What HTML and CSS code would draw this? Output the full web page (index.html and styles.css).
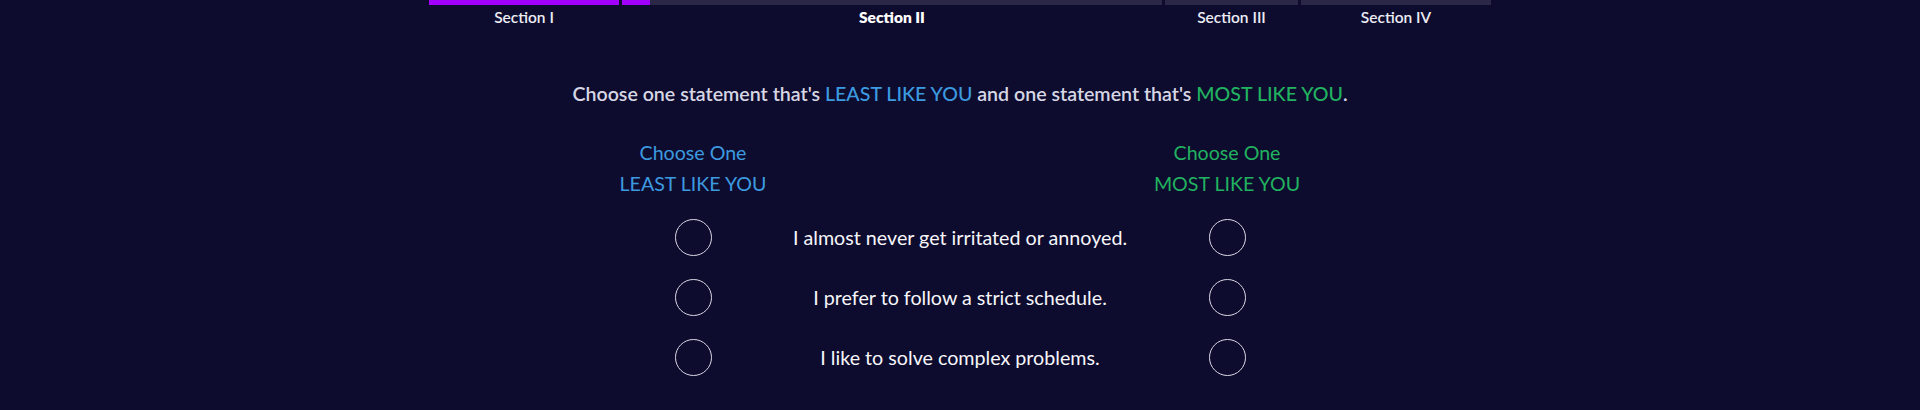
FILE: index.html
```html
<!DOCTYPE html>
<html lang="en">
<head>
<meta charset="utf-8">
<title>Assessment</title>
<link rel="stylesheet" href="styles.css">
</head>
<body>
<div class="progress">
  <div class="seg seg-1">
    <div class="track"><div class="fill" style="width:100%"></div></div>
    <div class="label">Section I</div>
  </div>
  <div class="seg seg-2">
    <div class="track"><div class="fill" style="width:28px"></div></div>
    <div class="label current">Section II</div>
  </div>
  <div class="seg seg-3">
    <div class="track"></div>
    <div class="label">Section III</div>
  </div>
  <div class="seg seg-4">
    <div class="track"></div>
    <div class="label">Section IV</div>
  </div>
</div>

<p class="prompt">Choose one statement that's <span class="least">LEAST LIKE YOU</span> and one statement that's <span class="most">MOST LIKE YOU</span>.</p>

<div class="question">
  <div class="col-head least">Choose One<br>LEAST LIKE YOU</div>
  <div class="col-head"></div>
  <div class="col-head most">Choose One<br>MOST LIKE YOU</div>

  <div class="cell"><span class="radio"></span></div>
  <div class="cell statement">I almost never get irritated or annoyed.</div>
  <div class="cell"><span class="radio"></span></div>

  <div class="cell"><span class="radio"></span></div>
  <div class="cell statement">I prefer to follow a strict schedule.</div>
  <div class="cell"><span class="radio"></span></div>

  <div class="cell"><span class="radio"></span></div>
  <div class="cell statement">I like to solve complex problems.</div>
  <div class="cell"><span class="radio"></span></div>
</div>
</body>
</html>
```
FILE: styles.css
```css
html, body {
  margin: 0;
  padding: 0;
  background: #0e0c2e;
  height: 100%;
}
body {
  font-family: Lato, "Open Sans", sans-serif;
  color: #ffffff;
}
.progress {
  width: 1062px;
  margin: 0 auto;
  display: flex;
  gap: 3px;
}
.seg-1 { width: 190px; }
.seg-2 { width: 540px; }
.seg-3 { width: 133px; }
.seg-4 { width: 190px; }
.track {
  height: 5px;
  background: #2a2846;
  display: flex;
}
.fill {
  background: #a100ff;
  height: 100%;
}
.label {
  text-align: center;
  font-size: 15.5px;
  font-weight: 600;
  line-height: 18px;
  margin-top: 3px;
  color: #ececf4;
}
.label.current {
  font-weight: 800;
  color: #ffffff;
}
.prompt {
  margin: 56px 0 0;
  text-align: center;
  font-size: 19.6px;
  font-weight: 600;
  line-height: 24px;
  color: #d6d6e4;
}
.least { color: #3c9be0; }
.most { color: #21b360; }
.prompt .least, .prompt .most { font-weight: 500; }
.question {
  margin-top: 31px;
  display: grid;
  grid-template-columns: 160px 374px 160px;
  grid-template-rows: 70px;
  grid-auto-rows: 60px;
  justify-content: center;
}
.col-head {
  text-align: center;
  font-size: 19.6px;
  line-height: 31px;
  font-weight: 400;
  white-space: nowrap;
}
.cell {
  display: flex;
  align-items: center;
  justify-content: center;
}
.statement {
  font-size: 19.7px;
  color: #f6f6fa;
  white-space: nowrap;
}
.radio {
  width: 35px;
  height: 35px;
  border: 1px solid #d8d8e4;
  border-radius: 50%;
  box-sizing: content-box;
}
```
